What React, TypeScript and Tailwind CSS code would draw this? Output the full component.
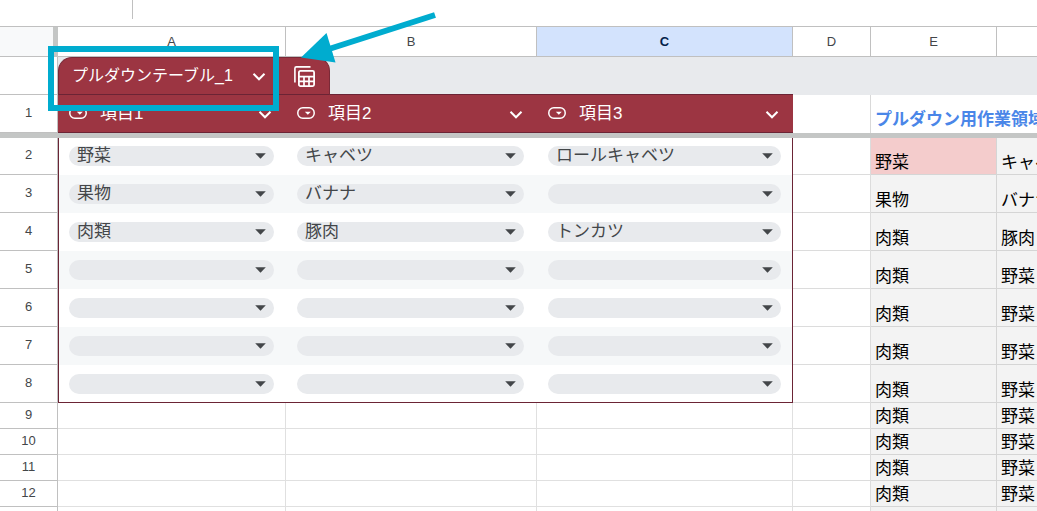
type Chip = { value: string; label: string };

type SheetRow = {
  number: number;
  chips?: string[];
  helper: [string, string];
};

const tableHeaders: Chip[] = [
  { value: "a", label: "項目1" },
  { value: "b", label: "項目2" },
  { value: "c", label: "項目3" },
];

const options = [
  ["", "野菜", "果物", "肉類"],
  ["", "キャベツ", "バナナ", "豚肉"],
  ["", "ロールキャベツ", "トンカツ"],
];

const chipCellStyles = [
  "border-l pr-3 pl-[10px]",
  "pr-[13px] pl-[11px]",
  "border-r pr-[11px] pl-[11px]",
];

const rows: SheetRow[] = [
  {
    number: 2,
    chips: ["野菜", "キャベツ", "ロールキャベツ"],
    helper: ["野菜", "キャベツ"],
  },
  { number: 3, chips: ["果物", "バナナ", ""], helper: ["果物", "バナナ"] },
  { number: 4, chips: ["肉類", "豚肉", "トンカツ"], helper: ["肉類", "豚肉"] },
  { number: 5, chips: ["", "", ""], helper: ["肉類", "野菜"] },
  { number: 6, chips: ["", "", ""], helper: ["肉類", "野菜"] },
  { number: 7, chips: ["", "", ""], helper: ["肉類", "野菜"] },
  { number: 8, chips: ["", "", ""], helper: ["肉類", "野菜"] },
  { number: 9, helper: ["肉類", "野菜"] },
  { number: 10, helper: ["肉類", "野菜"] },
  { number: 11, helper: ["肉類", "野菜"] },
  { number: 12, helper: ["肉類", "野菜"] },
];

export default function App() {
  return (
    <main className="relative h-screen overflow-hidden bg-white font-['Liberation_Sans','Noto_Sans_CJK_JP',sans-serif] text-[#434649]">
      <div className="h-[27px] border-b border-[#c0c0c0]">
        <div className="h-[19px] w-[133px] border-r border-[#c0c0c0]" />
      </div>

      <table className="w-full table-fixed border-separate border-spacing-0">
        <colgroup>
          <col className="w-[58px]" />
          <col className="w-[228px]" />
          <col className="w-[251px]" />
          <col className="w-[256px]" />
          <col className="w-[78px]" />
          <col className="w-[126px]" />
          <col />
        </colgroup>
        <thead>
          <tr className="h-[30px] text-[13px] leading-4">
            <td className="border-r-[5px] border-b border-r-[#c4c6c5] border-b-[#c0c0c0] bg-[#f8f9fa] p-0" />
            <ColumnHead name="A" />
            <ColumnHead name="B" />
            <ColumnHead name="C" selected />
            <ColumnHead name="D" />
            <ColumnHead name="E" />
            <td className="border-b border-[#c0c0c0] p-0" />
          </tr>
        </thead>
        <tbody>
          <tr className="h-[38px]">
            <td className="border-r border-b border-[#c0c0c0] p-0" />
            <td className="bg-[#e8eaed] p-0" colSpan={6}>
              <TableTab />
            </td>
          </tr>
          <tr className="h-[38px]">
            <RowHead number={1} />
            {tableHeaders.map((header) => (
              <TableHeader key={header.value} label={header.label} />
            ))}
            <td className="border-r border-[#d9d9d9] p-0" />
            <td
              className="p-0 pb-[3px] pl-1 align-bottom text-[17px] leading-5 font-bold whitespace-nowrap text-[#4a86e8]"
              colSpan={2}
            >
              プルダウン用作業領域
            </td>
          </tr>
          <tr className="h-[5px]">
            <td className="bg-[#c4c6c5] p-0" colSpan={7} />
          </tr>
          {rows.map((row) => (
            <DataRow key={row.number} row={row} />
          ))}
          <tr className="h-[26px]">
            <td className="border-r border-[#c0c0c0] p-0" />
            <td className="border-r border-[#e0e0e0] p-0" />
            <td className="border-r border-[#e0e0e0] p-0" />
            <td className="border-r border-[#e0e0e0] p-0" />
            <td className="border-r border-[#dcdcdc] p-0" />
            <td className="border-r border-[#d5d5d5] bg-[#f3f3f3] p-0" />
            <td className="bg-[#f3f3f3] p-0" />
          </tr>
        </tbody>
      </table>

      <Annotation />
    </main>
  );
}

function ColumnHead({ name, selected }: { name: string; selected?: boolean }) {
  return (
    <th
      className={`border-r border-b border-[#c0c0c0] p-0 text-center ${
        selected
          ? "bg-[#d3e3fd] font-bold text-[#041e49]"
          : "bg-white font-normal"
      }`}
      scope="col"
    >
      {name}
    </th>
  );
}

function RowHead({ number }: { number: number }) {
  return (
    <th
      className="border-r border-b border-[#c0c0c0] p-0 pb-[2px] text-center text-[13px] leading-4 font-normal"
      scope="row"
    >
      {number}
    </th>
  );
}

function TableTab() {
  return (
    <div className="flex h-[38px] w-[735px] items-stretch border-b border-[#6b2435]">
      <div className="-mb-px flex w-[272px] rounded-t-[14px] border border-[#7a2937] border-b-[#6b2435] bg-[#9c3542] text-white">
        <button
          className="flex w-[221px] items-center justify-between pr-[14px] pl-[13px] text-[16px] leading-5"
          type="button"
        >
          プルダウンテーブル_1
          <Chevron />
        </button>
        <button
          aria-label="表の計算"
          className="flex flex-1 items-center justify-center pr-px"
          type="button"
        >
          <TableIcon />
        </button>
      </div>
    </div>
  );
}

function TableHeader({ label }: { label: string }) {
  return (
    <th
      className="border-b border-[#6b2435] bg-[#9c3542] p-0 font-normal text-white"
      scope="col"
    >
      <div className="flex items-center pr-[14px] pl-[11px]">
        <svg
          aria-hidden="true"
          className="mb-[2px] h-3 w-[18px] shrink-0"
          fill="none"
          viewBox="0 0 18 12"
        >
          <rect
            height="10.4"
            rx="5"
            stroke="currentColor"
            strokeWidth="1.5"
            width="16.4"
            x="0.8"
            y="0.8"
          />
          <path d="M7.8 4.7h6L10.8 7.8z" fill="currentColor" />
        </svg>
        <span className="ml-[13px] flex-1 text-left text-[17px] leading-5">
          {label}
        </span>
        <button aria-label={`${label}のメニュー`} type="button">
          <Chevron />
        </button>
      </div>
    </th>
  );
}

function DataRow({ row }: { row: SheetRow }) {
  const isFirst = row.number === 2;
  const isLast = row.number === 8;
  const striped = row.number % 2 === 1;

  return (
    <tr
      className={isFirst ? "h-[37px]" : row.chips ? "h-[38px]" : "h-[26px]"}
    >
      <RowHead number={row.number} />
      {[0, 1, 2].map((column) =>
        row.chips ? (
          <td
            className={`border-[#6b2435] pt-0 ${chipCellStyles[column]} ${
              isLast ? "border-b pb-0" : "pb-px"
            } ${striped ? "bg-[#f6f8f9]" : "bg-white"}`}
            key={column}
          >
            <DropdownChip
              label={`${tableHeaders[column].label} ${row.number}`}
              options={options[column]}
              value={row.chips[column]}
            />
          </td>
        ) : (
          <td className="border-r border-b border-[#e0e0e0] p-0" key={column} />
        ),
      )}
      <td className="border-r border-b border-[#dcdcdc] p-0" />
      {row.helper.map((text, column) => (
        <td
          className={`overflow-hidden border-b border-[#d5d5d5] p-0 pb-px pl-1 align-bottom text-[17px] leading-5 whitespace-nowrap text-black ${
            column === 0 ? "border-r" : ""
          } ${isFirst && column === 0 ? "bg-[#f4cccc]" : "bg-[#f3f3f3]"}`}
          key={column}
        >
          {text}
        </td>
      ))}
    </tr>
  );
}

function DropdownChip({
  label,
  options,
  value,
}: {
  label: string;
  options: string[];
  value: string;
}) {
  return (
    <div className="relative">
      <select
        aria-label={label}
        className="block h-5 w-full appearance-none rounded-full bg-[#e8eaed] pr-7 pl-2 text-[17px] leading-5 text-[#434649]"
        defaultValue={value}
      >
        {options.map((option) => (
          <option key={option} value={option}>
            {option}
          </option>
        ))}
      </select>
      <svg
        aria-hidden="true"
        className="pointer-events-none absolute top-[7px] right-2 h-[6px] w-[11px]"
        fill="currentColor"
        viewBox="0 0 11 6"
      >
        <path d="M0.2 0.3h10.6L5.5 5.8z" />
      </svg>
    </div>
  );
}

function Chevron() {
  return (
    <svg
      aria-hidden="true"
      className="mt-px block h-[9px] w-[14px] shrink-0"
      fill="none"
      stroke="currentColor"
      strokeWidth="2"
      viewBox="0 0 14 9"
    >
      <path d="M1.5 1.8 7 7.3l5.5-5.5" />
    </svg>
  );
}

function TableIcon() {
  return (
    <svg
      aria-hidden="true"
      className="size-[21px]"
      fill="none"
      stroke="currentColor"
      viewBox="0 0 21 21"
    >
      <path d="M0.9 16.5V2.4Q0.9 0.9 2.4 0.9H16.5" strokeWidth="1.6" />
      <rect
        height="15.2"
        rx="1.5"
        strokeWidth="1.8"
        width="15.2"
        x="4.9"
        y="4.9"
      />
      <path d="M5 10.6h15M5 15.4h15M10 10.6v9.4M15 10.6v9.4" strokeWidth="1.7" />
    </svg>
  );
}

function Annotation() {
  return (
    <svg
      aria-hidden="true"
      className="pointer-events-none absolute top-0 left-0 h-[120px] w-[440px]"
      viewBox="0 0 440 120"
    >
      <rect
        fill="none"
        height="59"
        stroke="#00accf"
        strokeWidth="6"
        width="225"
        x="51"
        y="49"
      />
      <path d="M435 15 329 49" stroke="#00accf" strokeWidth="6" />
      <path d="M301 57.5 326.5 33 335.5 62.5z" fill="#00accf" />
    </svg>
  );
}
